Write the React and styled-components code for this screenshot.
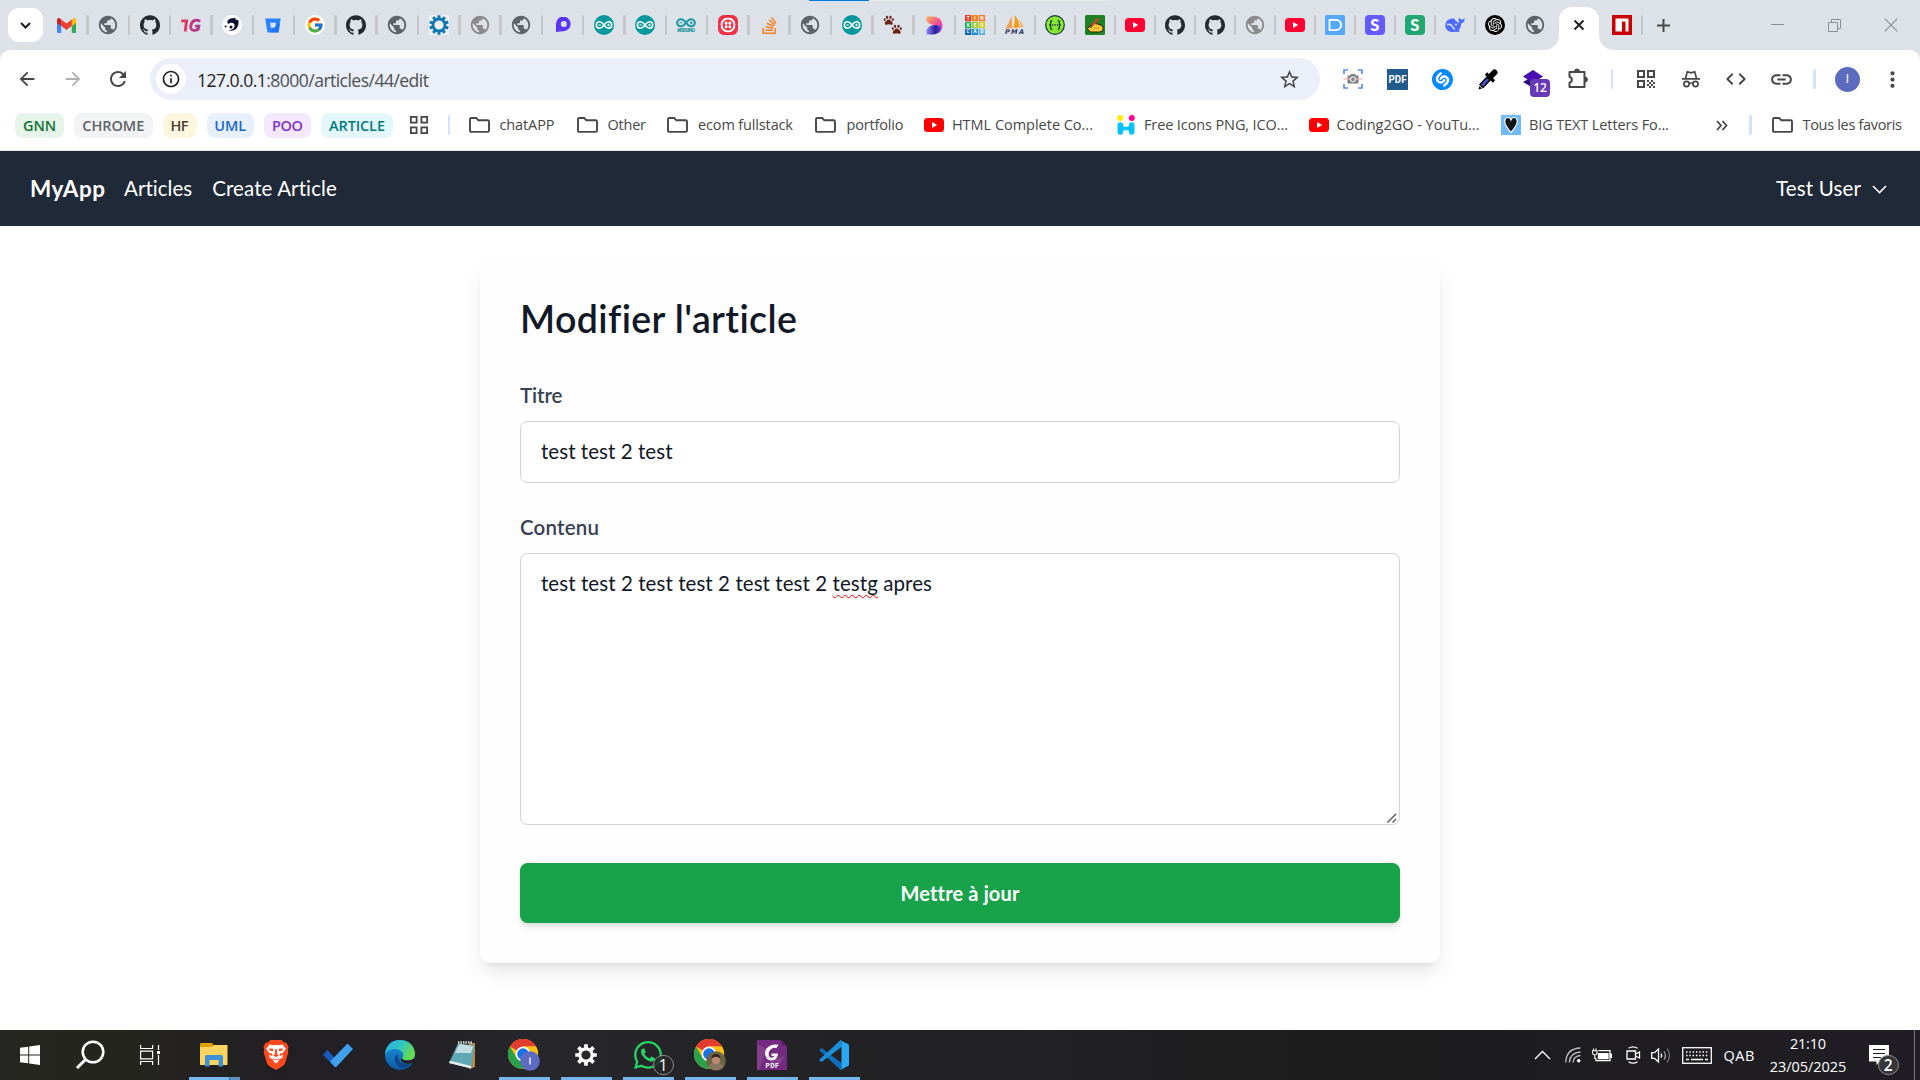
import React, { useLayoutEffect, useRef, useState } from "react";
import styled, { createGlobalStyle, css } from "styled-components";
import {
  SiGithub,
  SiTwilio,
  SiShazam,
  SiOpenai,
  SiStackoverflow,
} from "react-icons/si";
import { FaPaw, FaWhatsapp } from "react-icons/fa";
import { FcGoogle } from "react-icons/fc";
import {
  MdArrowBack,
  MdArrowForward,
  MdRefresh,
  MdStarBorder,
  MdQrCode,
  MdLink,
  MdCode,
  MdMoreVert,
  MdPublic,
  MdInfoOutline,
} from "react-icons/md";

const SYSTEM = `"Open Sans", "Noto Sans", sans-serif`;
const PAGE = `Lato, "Open Sans", sans-serif`;

const Global = createGlobalStyle`
  * { box-sizing: border-box; }
  body { margin: 0; background: #fff; overflow: hidden; }
  svg { display: block; flex: none; }
`;

/* ---------- text with a fixed measure ---------- */

const Measure = styled.span`
  display: inline-block;
  white-space: nowrap;
  flex: none;
`;

function Fit({ w, children }) {
  const ref = useRef(null);
  const [spacing, setSpacing] = useState(0);
  useLayoutEffect(() => {
    const el = ref.current;
    const count = el.textContent.length - 1;
    setSpacing((w - el.getBoundingClientRect().width) / count);
  }, [w]);
  return (
    <Measure ref={ref} style={{ letterSpacing: spacing, marginRight: -spacing }}>
      {children}
    </Measure>
  );
}

/* ---------- shell ---------- */

const Screen = styled.div`
  width: 1920px;
  height: 1080px;
  display: flex;
  flex-direction: column;
  background: #fff;
  font-family: ${SYSTEM};
`;

const Strip = styled.div`
  position: relative;
  height: 50px;
  flex: none;
  display: flex;
  align-items: stretch;
  background: #dde1e8;
`;

const LoadLine = styled.div`
  position: absolute;
  top: 0;
  left: 809px;
  width: 301px;
  height: 1px;
  background: linear-gradient(90deg, #0078d7 60px, #e8eaec 60px);
`;

const TabSearch = styled.div`
  width: 35px;
  height: 34px;
  margin: 8px 4.6px 0 8px;
  border-radius: 11px;
  background: #fff;
  display: flex;
  align-items: center;
  justify-content: center;
`;

const Tab = styled.div`
  width: ${(p) => p.$w}px;
  padding-left: ${(p) => p.$lead || 0}px;
  flex: none;
  display: flex;
  align-items: center;
`;

const TabIcon = styled.div`
  flex: 1;
  display: flex;
  justify-content: center;
`;

const TabRule = styled.div`
  width: 2.5px;
  height: 20px;
  border-radius: 1px;
  background: ${(p) => (p.$off ? "transparent" : "#c6c6c8")};
`;

const ActiveTab = styled.div`
  position: relative;
  width: 40px;
  height: 43px;
  margin: 7px 0 0 2.8px;
  flex: none;
  border-radius: 13px 13px 0 0;
  background: #fff;
  display: flex;
  justify-content: center;
  padding-top: 12px;
  &::before,
  &::after {
    content: "";
    position: absolute;
    bottom: 0;
    width: 15px;
    height: 15px;
  }
  &::before {
    right: 100%;
    background: radial-gradient(circle at 0 0, transparent 14.5px, #fff 15.5px);
  }
  &::after {
    left: 100%;
    background: radial-gradient(circle at 100% 0, transparent 14.5px, #fff 15.5px);
  }
`;

const WindowButtons = styled.div`
  margin-left: auto;
  display: flex;
  align-items: center;
  padding-right: 0.5px;
`;

const WindowButton = styled.div`
  width: 57px;
  display: flex;
  justify-content: center;
`;

const NewTab = styled.div`
  width: 40px;
  display: flex;
  align-items: center;
  justify-content: center;
`;

const ToolbarWrap = styled.div`
  height: 50px;
  flex: none;
  background: #dde1e8;
`;

const Toolbar = styled.div`
  height: 50px;
  display: flex;
  align-items: center;
  padding: 8px 1.5px 0 4.5px;
  background: #fff;
  border-radius: 10px 10px 0 0;
  color: #474747;
`;

const NavSlot = styled.div`
  width: 45.5px;
  display: flex;
  justify-content: center;
  color: ${(p) => (p.$dim ? "#b0b0b0" : "#474747")};
`;

const Omnibox = styled.div`
  width: 1170px;
  height: 42px;
  margin: 0 10px 0 9px;
  border-radius: 21px;
  background: #ebeff9;
  display: flex;
  align-items: center;
  padding: 0 19px 0 6px;
`;

const InfoDisc = styled.div`
  width: 30px;
  height: 30px;
  border-radius: 50%;
  background: #fff;
  color: #1f1f1f;
  display: flex;
  align-items: center;
  justify-content: center;
  margin-right: 11px;
`;

const Url = styled.div`
  font-size: 17.6px;
  line-height: 24px;
  color: #1f1f1f;
  flex: 1;
  padding-top: 2px;
`;

const UrlRest = styled.span`
  color: #4d5054;
`;

const Slot = styled.div`
  position: relative;
  width: ${(p) => p.$w || 45}px;
  height: 40px;
  display: flex;
  align-items: center;
  justify-content: center;
`;

const Rule = styled.div`
  width: 2.5px;
  height: 20px;
  border-radius: 1px;
  background: #d3e3fd;
`;

const Badge = styled.div`
  position: absolute;
  left: 20px;
  top: 20px;
  width: 20px;
  height: 18px;
  border-radius: 4px;
  background: #673ab7;
  color: #fff;
  font-weight: 600;
  font-size: 12px;
  line-height: 18px;
  text-align: center;
`;

const Avatar = styled.div`
  width: 25px;
  height: 25px;
  border-radius: 50%;
  background: #5c6bc0;
  color: #fff;
  font-size: 12px;
  line-height: 25px;
  text-align: center;
  font-family: Roboto, sans-serif;
`;

/* ---------- bookmarks ---------- */

const Bookmarks = styled.div`
  height: 51px;
  flex: none;
  display: flex;
  align-items: center;
  padding: 0 18px 0 15px;
  border-bottom: 1px solid #dfe5df;
  font-size: 14.5px;
  line-height: 20px;
  color: #474747;
`;

const Chip = styled.div`
  width: ${(p) => p.$w}px;
  height: 25px;
  margin-right: 10px;
  border-radius: 8px;
  background: ${(p) => p.$bg};
  color: ${(p) => p.$fg};
  font-weight: 600;
  line-height: 25px;
  display: flex;
  justify-content: center;
`;

const Mark = styled.div`
  display: flex;
  align-items: center;
  gap: ${(p) => p.$gap || 10}px;
  margin-right: ${(p) => p.$after}px;
`;

const GridSlot = styled.div`
  margin: 0 20px 0 6.5px;
`;

const BarRule = styled(Rule)`
  margin-right: ${(p) => p.$after}px;
`;

/* ---------- app page ---------- */

const Nav = styled.nav`
  height: 75px;
  flex: none;
  display: flex;
  align-items: center;
  padding: 0 33px 0 30px;
  background: #202938;
  color: #fff;
  font-family: ${PAGE};
  font-size: 20.5px;
  line-height: 30px;
`;

const Brand = styled.div`
  font-size: 22.5px;
  font-weight: 700;
  margin-right: 19px;
`;

const NavLink = styled.div`
  margin-right: 20px;
  padding-bottom: 2px;
`;

const UserMenu = styled.div`
  margin-left: auto;
  display: flex;
  align-items: center;
  gap: 11px;
`;

const UserName = styled.div`
  padding-bottom: 2px;
`;

const Chevron = styled.svg`
  margin-top: 2px;
`;

const Main = styled.main`
  flex: 1;
  padding-top: 30px;
  background: #fff;
  font-family: ${PAGE};
`;

const Card = styled.form`
  width: 960px;
  height: 707px;
  margin: 0 auto;
  padding: 40px;
  border-radius: 10px;
  background: #fefefe;
  box-shadow: 0 12.5px 18.75px -3.75px rgba(0, 0, 0, 0.1),
    0 5px 7.5px -5px rgba(0, 0, 0, 0.1);
`;

const Title = styled.h1`
  margin: 0 0 40px;
  font-size: 37.5px;
  line-height: 45px;
  font-weight: 600;
  color: #111827;
`;

const FieldLabel = styled.label`
  display: block;
  height: 30px;
  margin-bottom: 10px;
  font-size: 20.5px;
  line-height: 28px;
  font-weight: 600;
  color: #374151;
`;

const box = css`
  border: 1px solid #d1d3db;
  border-radius: 7.5px;
  background: #fff;
  font-size: 20.5px;
  line-height: 30px;
  color: #111827;
  padding: 14px 20px;
`;

const Field = styled.div`
  ${box}
  height: 62px;
  margin-bottom: 30px;
`;

const Area = styled.div`
  ${box}
  height: 272px;
  margin-bottom: 38px;
  display: flex;
  justify-content: space-between;
  padding-right: 2px;
  padding-bottom: 1px;
`;

const Grip = styled.svg`
  align-self: flex-end;
`;

const Misspelt = styled.span`
  text-decoration: underline wavy #f00 1px;
  text-underline-offset: 3px;
  text-decoration-skip-ink: none;
`;

const Submit = styled.div`
  height: 60px;
  border-radius: 7.5px;
  background: #18a34b;
  color: #fff;
  font-size: 20px;
  line-height: 60px;
  font-weight: 700;
  text-align: center;
  box-shadow: 0 5px 7.5px -1.25px rgba(0, 0, 0, 0.1),
    0 2.5px 5px -2.5px rgba(0, 0, 0, 0.1);
`;

/* ---------- taskbar ---------- */

const Taskbar = styled.footer`
  height: 50px;
  flex: none;
  display: flex;
  align-items: stretch;
  background: linear-gradient(
    90deg,
    #262622 0,
    #25251f 120px,
    #211f23 280px,
    #27262b 560px,
    #222224 880px,
    #1d1c1d 1400px,
    #201e24 1900px
  );
  color: #fff;
`;

const Launcher = styled.div`
  position: relative;
  width: ${(p) => p.$w || 62}px;
  margin-right: ${(p) => p.$after || 0}px;
  display: flex;
  align-items: center;
  justify-content: center;
  &::after {
    content: "";
    position: absolute;
    bottom: 0;
    left: 5.5px;
    width: 51px;
    height: 3px;
    background: ${(p) =>
      p.$split
        ? "linear-gradient(90deg, #76b9f2 40px, #3f6f98 40px 41px, #5d93c4 41px)"
        : p.$open
          ? "#76b5ee"
          : "transparent"};
  }
`;

const AppBadge = styled.div`
  position: absolute;
  left: 36px;
  top: 24.5px;
  width: 20.5px;
  height: 20.5px;
  border-radius: 50%;
  border: 1px solid #8c8c8c;
  background: rgba(38, 38, 40, 0.85);
  font-size: 15.5px;
  line-height: 18.5px;
  text-align: center;
`;

const Tray = styled.div`
  margin-left: auto;
  display: flex;
  align-items: center;
`;

const TraySlot = styled.div`
  position: relative;
  width: ${(p) => p.$w}px;
  padding-right: ${(p) => p.$end || 0}px;
  display: flex;
  justify-content: center;
  font-size: 14.5px;
`;

const Clock = styled.div`
  width: 104px;
  display: flex;
  flex-direction: column;
  align-items: center;
  font-size: 14.5px;
  line-height: 23px;
`;

const NoticeBadge = styled(AppBadge)`
  left: 18px;
  top: 9.5px;
  background: #37363a;
  font-weight: 600;
`;

const ShowDesktop = styled.div`
  width: 6px;
  align-self: stretch;
  border-left: 1px solid #77767a;
`;

/* ---------- icons ---------- */

const Globe = ({ c = "#5f6368" }) => <MdPublic size={22} color={c} />;

const Gmail = () => (
  <svg width="19" height="15" viewBox="0 0 19 15">
    <path d="M0 2v11.5Q0 15 1.3 15H4.2V4.5z" fill="#4285f4" />
    <path d="M19 2v11.5q0 1.5-1.3 1.5H14.8V4.5z" fill="#34a853" />
    <path d="M0 2.2Q0 0 1.8 0q.6 0 1.2.5L4.2 1.5V8L0 4.9z" fill="#c5221f" />
    <path d="M19 2.2Q19 0 17.2 0q-.6 0-1.2.5l-1.2 1V8L19 4.9z" fill="#fbbc04" />
    <path d="M4.2 1.5 9.5 5.5l5.3-4V8L9.5 12 4.2 8z" fill="#ea4335" />
  </svg>
);

const OneG = () => (
  <svg width="20" height="14" viewBox="0 0 21 15">
    <defs>
      <linearGradient id="oneg" gradientUnits="userSpaceOnUse" x1="0" y1="0" x2="21" y2="0">
        <stop offset="0" stopColor="#e93a57" />
        <stop offset="1" stopColor="#a5359d" />
      </linearGradient>
    </defs>
    <g fill="none" stroke="url(#oneg)" strokeWidth="3">
      <path d="M0 3H5.800L4.200 14.500" />
      <path d="M20.300 3.800Q18 1.500 14.500 2.500q-3.700 1.500-4.300 6.200-.2 4.500 3.300 4.600 3.200 0 4.600-1l.8-3.700h-4" />
    </g>
  </svg>
);

const Comet = () => (
  <svg width="20" height="20" viewBox="0 0 20 20">
    <circle cx="10" cy="10" r="10" fill="#fff" />
    <path
      d="M5.500 5.500Q9 2.400 14 3.300l-.8 1.200 3.300.8q.5 5-2 8.200-3.500 3.500-8 1.800 5 0 6-3.800.6-4-3.500-3.800-1.500.1-2.500 1.200Q5 8 5.500 5.500z"
      fill="#0c0b35"
    />
    <circle cx="3.600" cy="11.500" r="1" fill="#0c0b35" />
    <circle cx="9" cy="12" r="1.500" fill="#0c0b35" />
  </svg>
);

const Bitbucket = () => (
  <svg width="16" height="15" viewBox="0 0 16 15">
    <path d="M.2.5h15.500L13.500 14.500h-11z" fill="#2684ff" />
    <path d="M5 4.800h6l-.9 5h-4.200z" fill="#dde1e8" />
    <path d="M9 9.800 15.200 5l-1.700 9.500h-8z" fill="#1463dc" opacity=".5" />
  </svg>
);

const Google = () => (
  <svg width="20" height="20" viewBox="0 0 20 20">
    <circle cx="10" cy="10" r="10" fill="#fff" />
    <FcGoogle x="1" y="1" size={18} />
  </svg>
);

const teeth = (n) => Array.from({ length: n }, (_, i) => (i * 360) / n);

const Gear = ({ size, color, n, bg, inner, toothWidth }) => (
  <svg width={size} height={size} viewBox="-10 -10 20 20">
    {bg && <rect x="-10" y="-10" width="20" height="20" fill={bg} />}
    <circle r={inner + 1.4} fill="none" stroke={color} strokeWidth="2.8" />
    {teeth(n).map((a) => (
      <rect
        key={a}
        x={-toothWidth / 2}
        y="-9.8"
        width={toothWidth}
        height={9.8 - inner - 1}
        rx=".4"
        fill={color}
        transform={`rotate(${a})`}
      />
    ))}
  </svg>
);

const Drop = () => (
  <svg width="16" height="16" viewBox="0 0 16 16">
    <path d="M1 15V7.500A7.300 7.300 0 1 1 8.500 14.200Q5 14.300 1 15z" fill="#5a35f5" />
    <circle cx="8.800" cy="7" r="3" fill="#dde1e8" />
  </svg>
);

const Arduino = ({ plain }) => (
  <svg width="20" height="20" viewBox="0 0 20 20">
    {!plain && <circle cx="10" cy="10" r="10" fill="#00979d" />}
    <g
      fill="none"
      stroke={plain ? "#1a9aa0" : "#fff"}
      strokeWidth={plain ? 1.8 : 1.6}
      transform={plain ? "translate(-1.500 -3) scale(1.150 1.080)" : undefined}
    >
      <path d="M10 10C8.500 7.800 7.300 6.800 5.500 6.800a3.200 3.200 0 1 0 0 6.400C7.300 13.200 8.500 12.200 10 10s2.700-3.200 4.500-3.200a3.200 3.200 0 1 1 0 6.400C12.700 13.200 11.500 12.200 10 10z" />
      <path d="M4.300 10h2.500M13.200 10h2.600M14.500 8.700v2.600" strokeWidth="1" />
    </g>
    {plain && (
      <text
        x="10"
        y="17.2"
        fontSize="5"
        fontWeight="900"
        textAnchor="middle"
        textLength="18"
        fill="#1a9aa0"
        fontFamily="Roboto, sans-serif"
      >
        ARDUINO
      </text>
    )}
  </svg>
);

const Twilio = () => (
  <svg width="20" height="20" viewBox="0 0 20 20">
    <rect width="20" height="20" rx="6" fill="#f22f46" />
    <SiTwilio x="2.5" y="2.5" size={15} color="#fff" />
  </svg>
);

const Paws = () => (
  <svg width="20" height="20" viewBox="0 0 20 20">
    <FaPaw x="0.5" y="0" size={10.5} color="#6b2418" />
    <FaPaw x="8.5" y="9" size={10.5} color="#6b2418" />
  </svg>
);

const Dcolor = () => (
  <svg width="17" height="19" viewBox="0 0 17 19">
    <defs>
      <linearGradient id="da" x1="0" y1="0" x2="1" y2="1">
        <stop offset="0" stopColor="#fdb35c" />
        <stop offset=".5" stopColor="#f2558c" />
        <stop offset="1" stopColor="#c32fd8" />
      </linearGradient>
      <linearGradient id="db">
        <stop offset="0" stopColor="#8f8bff" />
        <stop offset=".6" stopColor="#2b1f94" />
        <stop offset="1" stopColor="#5a3be0" />
      </linearGradient>
    </defs>
    <path d="M.5.5H7q9 .5 9.500 9Q16 15 12 17.500L10 9Q3 9 .5 5z" fill="url(#da)" />
    <path d="M.5 18.500V14Q3 9 9 9q5 0 6 3-1.500 6.300-8 6.500z" fill="url(#db)" />
  </svg>
);

const TINKER = [
  ["T", "#ee3824"],
  ["I", "#f58220"],
  ["N", "#f47a30"],
  ["K", "#1eb04c"],
  ["E", "#9acb3b"],
  ["R", "#d2c912"],
  ["C", "#1666af"],
  ["A", "#1f8fd0"],
  ["D", "#5fb4e5"],
];

const Tinkercad = () => (
  <svg width="20" height="20" viewBox="0 0 20 20">
    {TINKER.map(([ch, c], i) => (
      <g key={ch} transform={`translate(${(i % 3) * 6.9} ${Math.floor(i / 3) * 6.9})`}>
        <rect width="6.2" height="6.2" fill={c} />
        <text
          x="3.1"
          y="4.7"
          fontSize="4.6"
          fontWeight="700"
          textAnchor="middle"
          fill="#fff"
          fontFamily="Roboto, sans-serif"
        >
          {ch}
        </text>
      </g>
    ))}
  </svg>
);

const Pma = () => (
  <svg width="21" height="20" viewBox="0 0 21 20">
    <path d="M7.500 1 8.500 13 1.500 13.500Q5 8 7.500 1z" fill="#f0a254" />
    <path d="M10.500 0Q16 6 15.500 12.500L9.500 13Q11.500 6 10.500 0z" fill="#f89c0e" />
    <path d="M15 4.500q4 4 4.500 7.500l-3 .5Q17 8 15 4.500z" fill="#f0b070" />
    <text
      x="10.5"
      y="18.5"
      fontSize="6.6"
      fontWeight="700"
      fontStyle="italic"
      textAnchor="middle"
      textLength="19"
      fill="#33365c"
      fontFamily="DejaVu Sans, sans-serif"
    >
      PMA
    </text>
  </svg>
);

const Swagger = () => (
  <svg width="20" height="20" viewBox="0 0 20 20">
    <circle cx="10" cy="10" r="9.300" fill="#85ea2d" stroke="#173647" strokeWidth="1.200" />
    <g fill="none" stroke="#173647" strokeWidth="1.300">
      <path d="M7.300 5.500Q5.600 5.500 5.700 7.300 5.900 10 4.200 10q1.700 0 1.500 2.700-.1 1.800 1.600 1.800" />
      <path d="M12.700 5.500q1.700 0 1.600 1.800-.2 2.700 1.500 2.700-1.700 0-1.500 2.700.1 1.800-1.600 1.800" />
    </g>
    <path d="M6.800 10h6.500" stroke="#173647" strokeWidth="1.400" strokeDasharray="1.400 1.100" />
  </svg>
);

const Writing = () => (
  <svg width="20" height="20" viewBox="0 0 20 20">
    <rect width="20" height="20" rx="1.5" fill="#1e8225" />
    <path
      d="M2.500 13.500 6 9.800l3.500-1.300 3 .5 4.500 1.500 1.300 3-1 2.500-2.800 1H5z"
      fill="#fbc93d"
      stroke="#2a2008"
      strokeWidth="1"
    />
    <path d="M13.700 3.500 7 10.500" stroke="#e0402a" strokeWidth="2.400" />
    <path d="m7 10.500-1.700 2.300" stroke="#222" strokeWidth="1.200" />
    <path d="M9 13h5.500" stroke="#c98e14" />
  </svg>
);

const Youtube = ({ c = "#ff0033" }) => (
  <svg width="20" height="14" viewBox="0 0 20 14">
    <rect width="20" height="14" rx="3.5" fill={c} />
    <path d="m8 4 5.200 3L8 10z" fill="#fff" />
  </svg>
);

const Docs = () => (
  <svg width="20" height="20" viewBox="0 0 20 20">
    <rect width="20" height="20" rx="1.5" fill="#55a8ff" />
    <path
      d="M4.500 4.800H11a5.200 5.200 0 0 1 0 10.400H4.500z"
      fill="none"
      stroke="#fff"
      strokeWidth="1.800"
    />
  </svg>
);

const LetterTile = styled.div`
  width: 20px;
  height: 20px;
  border-radius: 4px;
  background: ${(p) => p.$bg};
  color: #fff;
  font-family: Lato, sans-serif;
  font-weight: 900;
  font-size: 16.5px;
  line-height: 20px;
  text-align: center;
`;

const Whale = () => (
  <svg width="20" height="16" viewBox="0 0 20 16">
    <path
      d="M8.500 1.500Q10 1.500 10 3.300q2.500 1 3.600 3.200.6-1.500.1-3.200-.5-1.800.5-2.600.8 1.800 2.300 1.800 1.700 0 3-1.500.5 4.200-3.200 5.400-.5 4.600-2.700 6.900 1.200.5 1.200 1.300-2 .8-3.700-.2Q3.500 16.500.8 11.300-.8 5.800 2.500 3.300 5 1.200 8.500 1.500z"
      fill="#4d6bfe"
    />
    <path d="M2 7.500q3.500-1 5 1.700t3 3.200" stroke="#dde1e8" strokeWidth="1.400" fill="none" />
    <circle cx="11" cy="7.500" r="1.100" fill="#dde1e8" />
  </svg>
);

const ChatGpt = () => (
  <svg width="20" height="20" viewBox="0 0 20 20">
    <circle cx="10" cy="10" r="10" fill="#000" />
    <SiOpenai x="3" y="3" size={14} color="#fff" />
  </svg>
);

const Npm = () => (
  <svg width="20" height="20" viewBox="0 0 20 20">
    <rect width="20" height="20" fill="#cb0000" />
    <path d="M3.500 3.500h13v13H13.500v-10H10v10H3.500z" fill="#fff" />
  </svg>
);

const Cross = ({ s = 10, w = 2, c = "#1f1f1f" }) => (
  <svg width={s} height={s} viewBox="0 0 10 10">
    <path d="m.5.5 9 9m0-9-9 9" stroke={c} strokeWidth={w} fill="none" />
  </svg>
);

const Shot = () => (
  <svg width="20" height="20" viewBox="0 0 20 20">
    <path
      d="M1 5V1h4M15 1h4v4M19 15v4h-4M5 19H1v-4"
      fill="none"
      stroke="#5c8ff0"
      strokeWidth="1.700"
    />
    <path d="M4.500 6.500H7L8 5h4l1 1.500h2.500v8h-11z" fill="#7d7f82" />
    <path d="M.5 10h19" stroke="#f4b3ad" strokeWidth="1.200" />
    <circle cx="10" cy="10.300" r="2.500" fill="#8a8c8e" stroke="#eee" strokeWidth="1.100" />
  </svg>
);

const Pdf = () => (
  <svg width="21" height="21" viewBox="0 0 21 21">
    <rect width="21" height="21" fill="#215a8c" />
    <text
      x="10.5"
      y="14.3"
      fontSize="10.5"
      fontWeight="700"
      textAnchor="middle"
      textLength="18"
      lengthAdjust="spacingAndGlyphs"
      fill="#fff"
      fontFamily="Roboto, sans-serif"
    >
      PDF
    </text>
  </svg>
);

const Dropper = () => (
  <svg width="20" height="21" viewBox="0 0 20 21">
    <path d="m12.500 7.500-9.500 10" stroke="#000" strokeWidth="5.500" />
    <path d="m11 9-7 7.500" stroke="#4253c9" strokeWidth="2.600" />
    <path d="m8 4.500 8 8" stroke="#000" strokeWidth="3.200" />
    <path d="m12 8 4.500-4.500" stroke="#000" strokeWidth="6" strokeLinecap="round" />
    <path d="m.5 20.500 1-3.500 2.500 2.500z" fill="#000" />
  </svg>
);

const Layers = () => (
  <svg width="20" height="20" viewBox="0 0 20 20">
    <path d="m10 7 10 6-10 6-10-6z" fill="#2a0a75" />
    <path d="m10 1 10 6.500-10 6.500-10-6.500z" fill="#4a0fb0" />
  </svg>
);

const Puzzle = () => (
  <svg width="22" height="22" viewBox="0 0 22 22">
    <path
      d="M2.500 4H17.500V19H2.500V14.700a3.100 3.100 0 0 0 0-6z"
      fill="none"
      stroke="#474747"
      strokeWidth="2"
      strokeLinejoin="round"
    />
    <path d="M7.500 3.500a2.500 2.500 0 0 1 5 0zM18 9a2.500 2.500 0 0 1 0 5z" fill="#474747" stroke="#474747" />
  </svg>
);

const Incognito = () => (
  <svg width="20" height="18" viewBox="0 0 20 18">
    <g fill="none" stroke="#474747" strokeWidth="1.700">
      <path d="M1 8.800h18M4.500 8.500 6.300 1.800 10 2.800l3.700-1 1.800 6.700" />
      <circle cx="5.500" cy="14" r="2.600" />
      <circle cx="14.500" cy="14" r="2.600" />
      <path d="M8 13.500q2-1 4 0" />
    </g>
  </svg>
);

const Folder = () => (
  <svg width="21" height="16" viewBox="0 0 21 16">
    <path
      d="M1 2.200Q1 1 2.200 1h5l2.200 2.300h9.200Q20 3.300 20 4.600v8.900q0 1.400-1.300 1.400H2.300Q1 14.900 1 13.600z"
      fill="none"
      stroke="#474747"
      strokeWidth="1.900"
    />
  </svg>
);

const Apps = () => (
  <svg width="18" height="18" viewBox="0 0 18 18">
    {[0, 10.5].map((x) =>
      [0, 10.5].map((y) => (
        <rect
          key={`${x}-${y}`}
          x={x + 0.9}
          y={y + 0.9}
          width="5.7"
          height="5.7"
          fill="none"
          stroke="#474747"
          strokeWidth="1.8"
        />
      ))
    )}
  </svg>
);

const FreeIcons = () => (
  <svg width="18" height="20" viewBox="0 0 18 20">
    <circle cx="3.200" cy="3" r="3" fill="#ffee00" />
    <circle cx="14.800" cy="3" r="3" fill="#ff0090" />
    <path
      d="M3.300 10v7M14.700 10v7M3.300 13.500h11"
      stroke="#00c3ff"
      strokeWidth="5.500"
      strokeLinecap="round"
    />
    <path d="M6.500 8.500h5v3.200h-5zM6.500 15.300h5V20h-5z" fill="#fff" />
  </svg>
);

const HeartTile = () => (
  <svg width="20" height="20" viewBox="0 0 20 20">
    <rect width="20" height="20" fill="#6fbbfb" />
    <path
      d="M10 17.500Q4 10.500 3.700 6.500 4 2.500 7 2.500q2.200 0 3 2.300.8-2.300 3-2.300 3 0 3.300 4-.3 4-6.300 11z"
      fill="#101419"
      stroke="#fff"
      strokeWidth="1.200"
    />
  </svg>
);

const Windows = () => (
  <svg width="20" height="20" viewBox="0 0 20 20">
    <path d="M0 2.800 8.200 1.700v7.800H0zM9.200 1.500 20 0v9.500H9.200zM0 10.500h8.200v7.800L0 17.200zM9.200 10.500H20V20L9.200 18.500z" fill="#fff" />
  </svg>
);

const Lens = () => (
  <svg width="30" height="30" viewBox="0 0 30 30">
    <circle cx="18" cy="12" r="10.300" fill="none" stroke="#fff" strokeWidth="2.500" />
    <path d="M10.500 19.500 2 28" stroke="#fff" strokeWidth="3" />
  </svg>
);

const TaskView = () => (
  <svg width="20" height="20" viewBox="0 0 20 20">
    <g fill="none" stroke="#fff" strokeWidth="1.200">
      <path d="M.6 0v3.500h12V0M.6 20v-3.500h12V20M.6 6.200h12v7.600H.6zM18.500 0v5M18.500 10v10" />
    </g>
    <rect x="17" y="6" width="3" height="3" fill="#fff" />
  </svg>
);

const Explorer = () => (
  <svg width="28" height="24" viewBox="0 0 28 24">
    <path d="M0 1.200Q0 0 1 0h11l2 2.500V6H0z" fill="#e0a000" />
    <path d="M0 4h12l2-2h13.500v19.500q0 .5-.5.5H.5Q0 22 0 21.500z" fill="#fcd462" />
    <path d="M5 23.500V13.500Q5 12 6.500 12h15q1.500 0 1.500 1.500v10h-4.500V17H9.500v6.500z" fill="#3f92d6" />
  </svg>
);

const Brave = () => (
  <svg width="26" height="30" viewBox="0 0 26 30">
    <path
      d="M7.500 0h11L21 2.500l2.500.2L25.500 7l-.7 2.500.5 3-3.500 11.500Q20 26.500 13 30 6 26.500 4.200 24L.7 12.500l.5-3L.5 7 2.500 2.700 5 2.500z"
      fill="#fb4a1e"
    />
    <path
      d="m13 5 3.200.2L19.500 4.500 22.800 9l-3.600 4.800.8 2-.8 2-3 1.500-.8 2L13 23.500 10.600 21.300l-.8-2-3-1.500-.8-2 .8-2L3.200 9 6.500 4.500l3.300.7z"
      fill="#fff"
    />
    <path
      d="M6.500 8.200 10.500 9l-.7 2.300-3.500-.8zM19.500 8.200 15.500 9l.7 2.300 3.500-.8zM12.300 9h1.400l.6 5.500 1.700.8-3 1.700-3-1.700 1.700-.8zM10 18.200l3 1.300 3-1.300-.8 1.300-2.200.8-2.200-.8zM6.500 12.500l3 1.500-.5 2-2.300-1zM19.500 12.500l-3 1.500.5 2 2.300-1z"
      fill="#fb4a1e"
    />
  </svg>
);

const Todo = () => (
  <svg width="30" height="25" viewBox="0 0 30 25">
    <path d="M4.500 7 0 11.700l10 10.500q1.300 1.200 2.300 0l3-3.500z" fill="#185abd" />
    <path d="M24.500.5 7 18.500l4.500 5.300q1 .8 2 0L30 6z" fill="#41a0ec" />
  </svg>
);

const Edge = () => (
  <svg width="30" height="30" viewBox="0 0 30 30">
    <defs>
      <linearGradient id="ea" x1="0" y1="0" x2="1" y2=".5">
        <stop offset="0" stopColor="#2fa9e6" />
        <stop offset=".5" stopColor="#2fc3c8" />
        <stop offset="1" stopColor="#66dc4e" />
      </linearGradient>
      <linearGradient id="eb" x1="0" y1="0" x2="0" y2="1">
        <stop offset="0" stopColor="#1b97dc" />
        <stop offset="1" stopColor="#0c59a4" />
      </linearGradient>
    </defs>
    <circle cx="15" cy="15" r="15" fill="url(#eb)" />
    <path d="M0 14Q2 0 15 0q13 .5 15 13 .2 7.500-7.500 7.500-5 0-5.500-2.500 2-2 .8-5Q15 8.500 8.500 9 2.500 10 0 14z" fill="url(#ea)" />
    <path d="M10.500 15.500Q8.500 22 13.500 26.500q6 4.500 13-3.500-8 3-12-1.500-2.500-3.500-1-7.500z" fill="#12468a" />
    <path d="M17 18q.5 2.500 5.500 2.500 4 0 8-2.500l1.500 8-4.300-3Q20 25 16.500 21.500q-1-2 .5-3.500z" fill="#211f23" />
  </svg>
);

const Notepad = () => (
  <svg width="27" height="28" viewBox="0 0 27 28">
    <path d="M20 2h6v24l-6 2z" fill="#b08a4a" />
    <path d="M9 2.500 25 4.500 22 27.500 0 22z" fill="#5fa9b6" />
    <path d="M10 3 24.500 5 22 12 6 12z" fill="#c3dde2" />
    <path d="M9 1.500h15" stroke="#d8d8d8" strokeWidth="2.500" strokeDasharray="1.500 1" />
    <path d="M0 22 22 27.500l.3-2.500L1 19.800z" fill="#e6eef0" />
  </svg>
);

const Chrome = ({ person }) => (
  <svg width="32" height="32" viewBox="0 0 32 32">
    <circle cx="15" cy="15" r="15" fill="#fbc116" />
    <path d="M15 15 2 7.500A15 15 0 0 1 28 7.500H15z" fill="#e33b2e" />
    <path d="M2 7.500A15 15 0 0 0 15 30l6.500-11.300L15 15 8.500 18.800z" fill="#2ca14c" />
    <path d="M15 7.500H28A15 15 0 0 1 15 30l6.500-11.300z" fill="#fbc116" />
    <circle cx="15" cy="15" r="7.400" fill="#fff" />
    <circle cx="15" cy="15" r="5.800" fill="#1a73e8" />
    {person ? (
      <g>
        <circle cx="22" cy="22" r="9.800" fill="#6b6445" />
        <path d="M14.500 28q1-4 7-4.500 7 0 8 4.500-7 6-15 0z" fill="#8a7660" />
        <circle cx="22" cy="21" r="4.300" fill="#b98a70" />
        <path d="M17.500 20q0-5 4.500-5t4.500 5q-1.800-2.500-4.500-2.300-2.700-.2-4.500 2.300z" fill="#32251c" />
      </g>
    ) : (
      <g>
        <circle cx="22" cy="22" r="9.800" fill="#5c6bc0" />
        <path d="M22 18.500v7" stroke="#c8cdec" strokeWidth="2" />
      </g>
    )}
  </svg>
);

const Foxit = () => (
  <svg width="30" height="30" viewBox="0 0 30 30">
    <path d="M0 0h23.500L30 6.500V30H0z" fill="#742a80" />
    <path d="M0 4 10 9 2 30l-2-2zM12 20l16-4-8 12z" fill="#8d4f98" opacity=".6" />
    <path d="M24.500 0 30 5.500h-5.500z" fill="#5a1a66" />
    <path
      d="M21.500 4.800q-4-.6-8 .6Q8 8 8 13.500q.5 6.500 6.500 7 6-.5 6.500-7h-6.500v2.600h2.800q-.8 1.700-2.800 1.700-3-.5-2.800-4.300.3-4 4.300-5.500 1.500-.5 3.200.2z"
      fill="#fff"
    />
    <text
      x="15"
      y="27.500"
      fontSize="6.500"
      fontWeight="700"
      textAnchor="middle"
      textLength="13"
      fill="#fff"
      fontFamily="Roboto, sans-serif"
    >
      PDF
    </text>
  </svg>
);

const VsCode = () => (
  <svg width="30" height="30" viewBox="0 0 30 30">
    <path d="M0 10 2.500 8 22.500 23v7Q21.500 30 20.500 29z" fill="#0f6fb8" />
    <path d="M0 20 20.500 1q1-1 2-1v7L2.500 22z" fill="#1c8fdc" />
    <path d="M21 .2 29 4q1 .5 1 1.500v19q0 1-1 1.500L21.500 30q1-.5 1-2V2q0-1.500-1.500-1.800z" fill="#29a9f2" />
  </svg>
);

const line = { fill: "none", stroke: "#fff", strokeWidth: 1.3 };

const Wifi = () => (
  <svg width="16" height="16" viewBox="0 0 16 16">
    <g fill="none" stroke="#bdbdbd" strokeWidth="1.300">
      <path d="M.7 15.500Q1.200 1.500 15.500 1M4.300 15.500Q5 5.500 15.500 5M8 15.500q.5-6.500 7.500-7" />
    </g>
    <circle cx="13.700" cy="13.700" r="1.800" fill="#fff" />
  </svg>
);

const Battery = () => (
  <svg width="20" height="14" viewBox="0 0 20 14">
    <path d="M6.500 2.700h11.500v10H4V10.500M19.300 5.500v4.500" {...line} />
    <rect x="5.800" y="5" width="10.800" height="6.200" fill="#fff" />
    <path d="M.5 2.800h4.500v2.500q-.5 1.700-2.200 1.700T.5 5.300zM1.500 .5v2M4 .5v2M2.800 7V10.500H4" {...line} strokeWidth="1.1" />
  </svg>
);

const Meet = () => (
  <svg width="15" height="18" viewBox="0 0 15 18">
    <path d="M1 5h8.500v8H1zM9.500 8 13.500 6v6l-4-2M2.500 2.300Q7 -.5 11.500 2.300M2.500 15.700Q7 18.500 11.500 15.700" {...line} />
  </svg>
);

const Volume = () => (
  <svg width="21" height="17" viewBox="0 0 21 17">
    <path d="M.7 5.700H3.500L7.500 2v13L3.500 11.300H.7zM10 6.500q1.300 2 0 4" {...line} />
    <path d="M13 4.500q2.800 4 0 8" fill="none" stroke="#aaa" strokeWidth="1.200" />
    <path d="M16 1.500q5 7 0 14" fill="none" stroke="#777" strokeWidth="1.200" />
  </svg>
);

const Keyboard = () => (
  <svg width="30" height="17" viewBox="0 0 30 17">
    <rect x=".7" y=".7" width="28.600" height="15.600" {...line} />
    <path d="M4 5h22.500M4 8.500h22.500" stroke="#fff" strokeWidth="1.500" strokeDasharray="1.500 1.800" />
    <path d="M4 12.500h3M9 12.500h12M23 12.500h3" stroke="#fff" strokeWidth="1.300" />
  </svg>
);

const Notice = () => (
  <svg width="20" height="20" viewBox="0 0 20 20">
    <path d="M0 0h20v16.500H11L7.500 20v-3.500H0z" fill="#fff" />
    <path d="M4 4.500h12M4 8.500h12M4 12.500h8" stroke="#222" strokeWidth="1.200" />
  </svg>
);

/* ---------- data ---------- */

const github = <SiGithub size={20} color="#24292f" />;
const gray = <Globe c="#8a8a8a" />;

const TABS = [
  <Gmail />,
  <Globe />,
  github,
  <OneG />,
  <Comet />,
  <Bitbucket />,
  <Google />,
  github,
  <Globe />,
  <Gear size={20} color="#0f78b4" n={10} bg="#eef0f2" inner={4.6} toothWidth={3} />,
  gray,
  <Globe />,
  <Drop />,
  <Arduino />,
  <Arduino />,
  <Arduino plain />,
  <Twilio />,
  <SiStackoverflow size={17} color="#f48024" />,
  <Globe />,
  <Arduino />,
  <Paws />,
  <Dcolor />,
  <Tinkercad />,
  <Pma />,
  <Swagger />,
  <Writing />,
  <Youtube />,
  github,
  github,
  gray,
  <Youtube />,
  <Docs />,
  <LetterTile $bg="#635bff">S</LetterTile>,
  <LetterTile $bg="#1fa971">S</LetterTile>,
  <Whale />,
  <ChatGpt />,
  <Globe />,
];

const CHIPS = [
  ["GNN", 49, 33, "#e6f4ea", "#137333"],
  ["CHROME", 78.5, 62, "#f1f3f4", "#5f6368"],
  ["HF", 34, 18, "#fef7e0", "#4a3c2c"],
  ["UML", 47.5, 32, "#e8f0fe", "#1967d2"],
  ["POO", 47, 31, "#f3e8fd", "#8430ce"],
  ["ARTICLE", 72, 56, "#e4f7fb", "#007b83"],
];

const MARKS = [
  [<Folder />, "chatAPP", 55, 10, 22],
  [<Folder />, "Other", 38.5, 10, 21.5],
  [<Folder />, "ecom fullstack", 95, 9.5, 22.5],
  [<Folder />, "portfolio", 57, 10, 21],
  [<Youtube c="#ff0000" />, "HTML Complete Co...", 141, 7.5, 24],
  [<FreeIcons />, "Free Icons PNG, ICO...", 144, 9, 21],
  [<Youtube c="#ff0000" />, "Coding2GO - YouTu...", 143, 7.5, 21.5],
  [<HeartTile />, "BIG TEXT Letters Fo...", 140, 8, 0],
];

const LAUNCHERS = [
  { icon: <Explorer />, split: true },
  { icon: <Brave /> },
  { icon: <Todo /> },
  { icon: <Edge /> },
  { icon: <Notepad /> },
  { icon: <Chrome />, open: true },
  { icon: <Gear size={22} color="#fff" n={8} inner={4.2} toothWidth={3.4} />, open: true },
  { icon: <FaWhatsapp size={32} color="#25d366" />, open: true, badge: "1" },
  { icon: <Chrome person />, open: true },
  { icon: <Foxit />, open: true },
  { icon: <VsCode />, open: true },
];

/* ---------- sections ---------- */

function TabStrip() {
  return (
    <Strip>
      <LoadLine />
      <TabSearch>
        <svg width="11" height="7" viewBox="0 0 11 7">
          <path d="m1 1 4.500 4.500L10 1" fill="none" stroke="#1f1f1f" strokeWidth="2.100" />
        </svg>
      </TabSearch>
      {TABS.map((icon, i) => (
        <Tab key={i} $w={i < 22 ? 41.3 : 40}>
          <TabIcon>{icon}</TabIcon>
          <TabRule $off={i === TABS.length - 1} />
        </Tab>
      ))}
      <ActiveTab>
        <svg width="12" height="12" viewBox="0 0 12 12">
          <path d="m1.500 1.500 9 9m0-9-9 9" stroke="#1f1f1f" strokeWidth="1.900" />
        </svg>
      </ActiveTab>
      <Tab $w={44.5} $lead={4}>
        <TabIcon>
          <Npm />
        </TabIcon>
        <TabRule />
      </Tab>
      <NewTab>
        <svg width="13" height="13" viewBox="0 0 13 13">
          <path d="M6.500 0v13M0 6.500h13" stroke="#474747" strokeWidth="2" />
        </svg>
      </NewTab>
      <WindowButtons>
        <WindowButton>
          <svg width="13" height="13" viewBox="0 0 13 13">
            <path d="M0 5.500h13" stroke="#8c8e92" />
          </svg>
        </WindowButton>
        <WindowButton>
          <svg width="13" height="13" viewBox="0 0 13 13">
            <path d="M.5 3.500h9v9h-9zM3.500 3V.5h9v9H10" fill="none" stroke="#8c8e92" />
          </svg>
        </WindowButton>
        <WindowButton>
          <Cross s={14} w={0.8} c="#8c8e92" />
        </WindowButton>
      </WindowButtons>
    </Strip>
  );
}

function AddressBar() {
  return (
    <ToolbarWrap>
      <Toolbar>
        <NavSlot>
          <MdArrowBack size={22} />
        </NavSlot>
        <NavSlot $dim>
          <MdArrowForward size={22} />
        </NavSlot>
        <NavSlot>
          <MdRefresh size={24} />
        </NavSlot>
        <Omnibox>
          <InfoDisc>
            <MdInfoOutline size={20} />
          </InfoDisc>
          <Url>
            <Fit w={232}>
              127.0.0.1<UrlRest>:8000/articles/44/edit</UrlRest>
            </Fit>
          </Url>
          <MdStarBorder size={23} />
        </Omnibox>
        <Slot>
          <Shot />
        </Slot>
        <Slot>
          <Pdf />
        </Slot>
        <Slot>
          <SiShazam size={21} color="#0088ff" />
        </Slot>
        <Slot>
          <Dropper />
        </Slot>
        <Slot>
          <Layers />
          <Badge>12</Badge>
        </Slot>
        <Slot>
          <Puzzle />
        </Slot>
        <Slot $w={23.5}>
          <Rule />
        </Slot>
        <Slot>
          <MdQrCode size={24} />
        </Slot>
        <Slot>
          <Incognito />
        </Slot>
        <Slot>
          <MdCode size={24} />
        </Slot>
        <Slot>
          <MdLink size={25} />
        </Slot>
        <Slot $w={21.5}>
          <Rule />
        </Slot>
        <Slot>
          <Avatar>I</Avatar>
        </Slot>
        <Slot $w={44}>
          <MdMoreVert size={25} />
        </Slot>
      </Toolbar>
    </ToolbarWrap>
  );
}

const Favourites = styled.div`
  margin-left: auto;
  display: flex;
  align-items: center;
`;

const MoreMarks = styled.div`
  margin-right: 21px;
`;

function BookmarkBar() {
  return (
    <Bookmarks>
      {CHIPS.map(([label, w, tw, bg, fg]) => (
        <Chip key={label} $w={w} $bg={bg} $fg={fg}>
          <Fit w={tw}>{label}</Fit>
        </Chip>
      ))}
      <GridSlot>
        <Apps />
      </GridSlot>
      <BarRule $after={18.5} />
      {MARKS.map(([icon, label, w, gap, after]) => (
        <Mark key={label} $gap={gap} $after={after}>
          {icon}
          <Fit w={w}>{label}</Fit>
        </Mark>
      ))}
      <Favourites>
        <MoreMarks>
          <svg width="12" height="11" viewBox="0 0 12 11">
            <path d="m1 1 4 4.500L1 10M6.500 1l4 4.500-4 4.500" fill="none" stroke="#474747" strokeWidth="1.800" />
          </svg>
        </MoreMarks>
        <BarRule $after={20} />
        <Mark $gap={10} $after={0}>
          <Folder />
          <Fit w={99.5}>Tous les favoris</Fit>
        </Mark>
      </Favourites>
    </Bookmarks>
  );
}

function Page() {
  return (
    <>
      <Nav>
        <Brand>
          <Fit w={75}>MyApp</Fit>
        </Brand>
        <NavLink>
          <Fit w={68.5}>Articles</Fit>
        </NavLink>
        <NavLink>
          <Fit w={125}>Create Article</Fit>
        </NavLink>
        <UserMenu>
          <UserName>
            <Fit w={85}>Test User</Fit>
          </UserName>
          <Chevron width="15" height="9" viewBox="0 0 15 9">
            <path d="m1 1 6.500 6.500L14 1" fill="none" stroke="#fff" strokeWidth="1.600" />
          </Chevron>
        </UserMenu>
      </Nav>
      <Main>
        <Card>
          <Title>
            <Fit w={277}>Modifier l'article</Fit>
          </Title>
          <FieldLabel>
            <Fit w={42.5}>Titre</Fit>
          </FieldLabel>
          <Field>
            <Fit w={131.5}>test test 2 test</Fit>
          </Field>
          <FieldLabel>
            <Fit w={79}>Contenu</Fit>
          </FieldLabel>
          <Area>
            <Fit w={391}>
              test test 2 test test 2 test test 2 <Misspelt>testg</Misspelt> apres
            </Fit>
            <Grip width="10" height="10" viewBox="0 0 10 10">
              <path d="M.5 9.500 9 1M5.500 9.500 9 6" stroke="#555" strokeWidth="1.400" />
            </Grip>
          </Area>
          <Submit>
            <Fit w={118}>Mettre à jour</Fit>
          </Submit>
        </Card>
      </Main>
    </>
  );
}

function Desktop() {
  return (
    <Taskbar>
      <Launcher $w={60}>
        <Windows />
      </Launcher>
      <Launcher $w={60}>
        <Lens />
      </Launcher>
      <Launcher $w={60} $after={3}>
        <TaskView />
      </Launcher>
      {LAUNCHERS.map((l, i) => (
        <Launcher key={i} $open={l.open} $split={l.split}>
          {l.icon}
          {l.badge && <AppBadge>{l.badge}</AppBadge>}
        </Launcher>
      ))}
      <Tray>
        <TraySlot $w={30}>
          <svg width="17" height="10" viewBox="0 0 17 10">
            <path d="m1 9 7.500-7.500L16 9" {...line} />
          </svg>
        </TraySlot>
        <TraySlot $w={32}>
          <Wifi />
        </TraySlot>
        <TraySlot $w={26}>
          <Battery />
        </TraySlot>
        <TraySlot $w={36}>
          <Meet />
        </TraySlot>
        <TraySlot $w={21}>
          <Volume />
        </TraySlot>
        <TraySlot $w={50}>
          <Keyboard />
        </TraySlot>
        <TraySlot $w={34}>
          <Fit w={31}>QAB</Fit>
        </TraySlot>
        <Clock>
          <Fit w={36}>21:10</Fit>
          <Fit w={76.5}>23/05/2025</Fit>
        </Clock>
        <TraySlot $w={54} $end={16}>
          <Notice />
          <NoticeBadge>2</NoticeBadge>
        </TraySlot>
        <ShowDesktop />
      </Tray>
    </Taskbar>
  );
}

export default function App() {
  return (
    <Screen>
      <Global />
      <TabStrip />
      <AddressBar />
      <BookmarkBar />
      <Page />
      <Desktop />
    </Screen>
  );
}
